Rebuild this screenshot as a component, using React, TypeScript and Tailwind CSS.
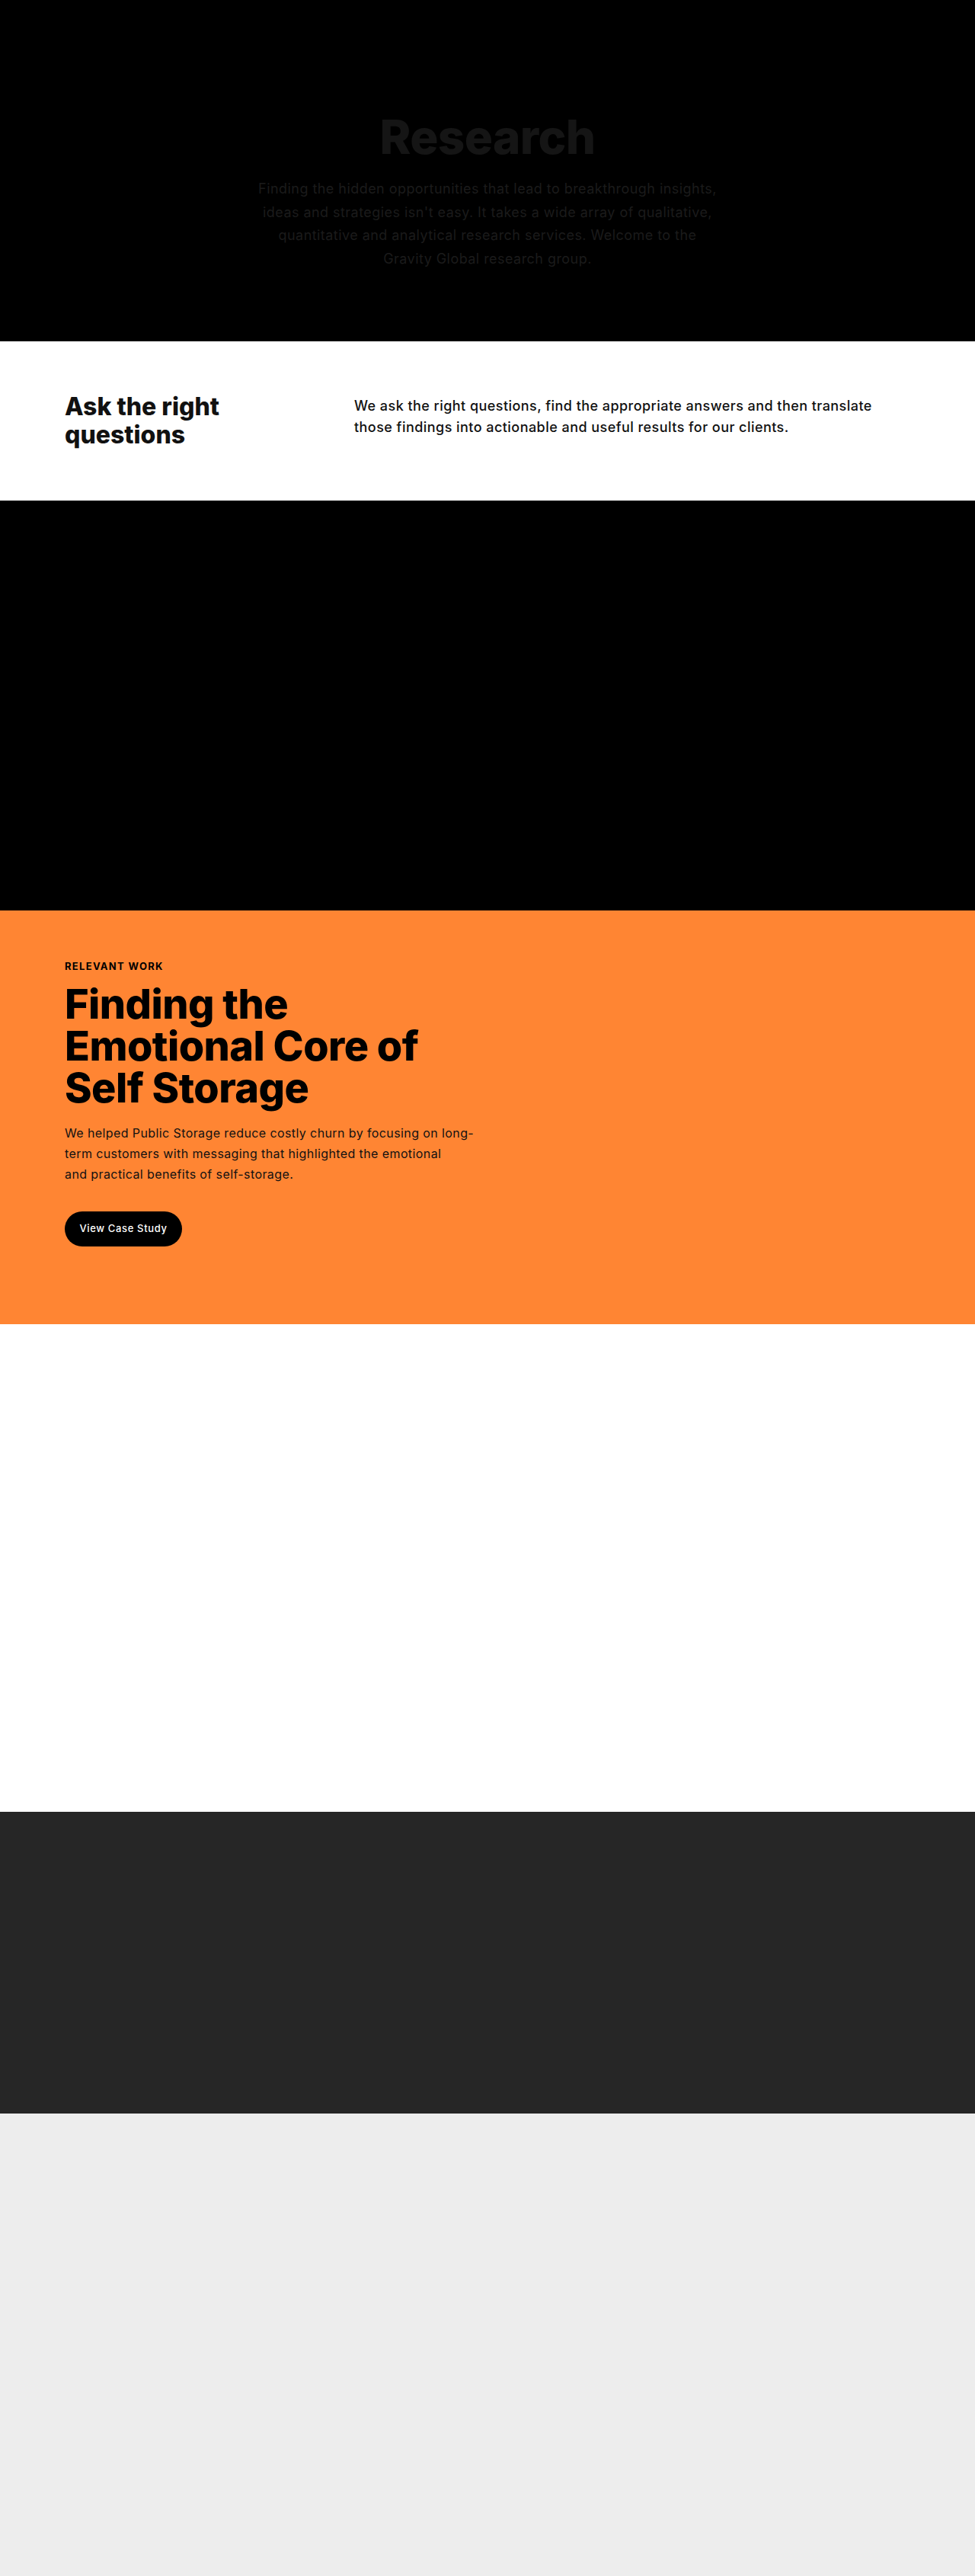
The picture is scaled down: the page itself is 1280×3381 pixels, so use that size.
const App = () => {
  return (
    <div className="font-['Inter',sans-serif] w-full">
      {/* hero */}
      <section className="bg-black h-[448px] flex flex-col items-center pt-[143px]">
        <h1 className="text-[62px] leading-[1.2] font-extrabold text-[#151515] tracking-[-0.01em]">Research</h1>
        <p className="mt-4 max-w-[612px] text-center text-[18px] leading-[30.5px] tracking-[0.025em] text-[#1b1b1b]">
          Finding the hidden opportunities that lead to breakthrough insights, ideas and strategies isn't easy. It takes a wide array of qualitative, quantitative and analytical research services. Welcome to the Gravity Global research group.
        </p>
      </section>

      {/* intro */}
      <section className="bg-white h-[209px] pt-[67px] px-[85px] flex">
        <h2 className="w-[380px] shrink-0 text-[32px] leading-[37px] font-extrabold text-[#111]">
          Ask the right
          <br />
          questions
        </h2>
        <p className="mt-1 max-w-[730px] text-[18px] leading-[28px] font-medium tracking-[0.025em] text-[#111]">
          We ask the right questions, find the appropriate answers and then translate those findings into actionable and useful results for our clients.
        </p>
      </section>

      {/* media placeholder */}
      <section className="bg-black h-[538px]"></section>

      {/* relevant work */}
      <section className="bg-[#ff8533] h-[543px] pt-[63px] px-[85px]">
        <div className="max-w-[540px]">
          <p className="text-[13px] leading-[20px] font-bold tracking-[0.1em] text-black">RELEVANT WORK</p>
          <h2 className="mt-3 text-[54px] leading-[55px] font-extrabold text-black tracking-[-0.01em]">
            Finding the Emotional Core of Self Storage
          </h2>
          <p className="mt-[19px] text-[16px] leading-[27px] tracking-[0.025em] text-[#111]">
            We helped Public Storage reduce costly churn by focusing on long-term customers with messaging that highlighted the emotional
            <br />
            and practical benefits of self-storage.
          </p>
          <button className="mt-[35px] h-[46px] w-[154px] rounded-full bg-black text-white text-[13px] font-medium tracking-[0.05em]">
            View Case Study
          </button>
        </div>
      </section>

      {/* white band */}
      <section className="bg-white h-[640px]"></section>

      {/* dark band */}
      <section className="bg-[#262626] h-[396px]"></section>

      {/* footer area */}
      <section className="bg-[#ededed] h-[607px]"></section>
    </div>
  );
};

export default App;
